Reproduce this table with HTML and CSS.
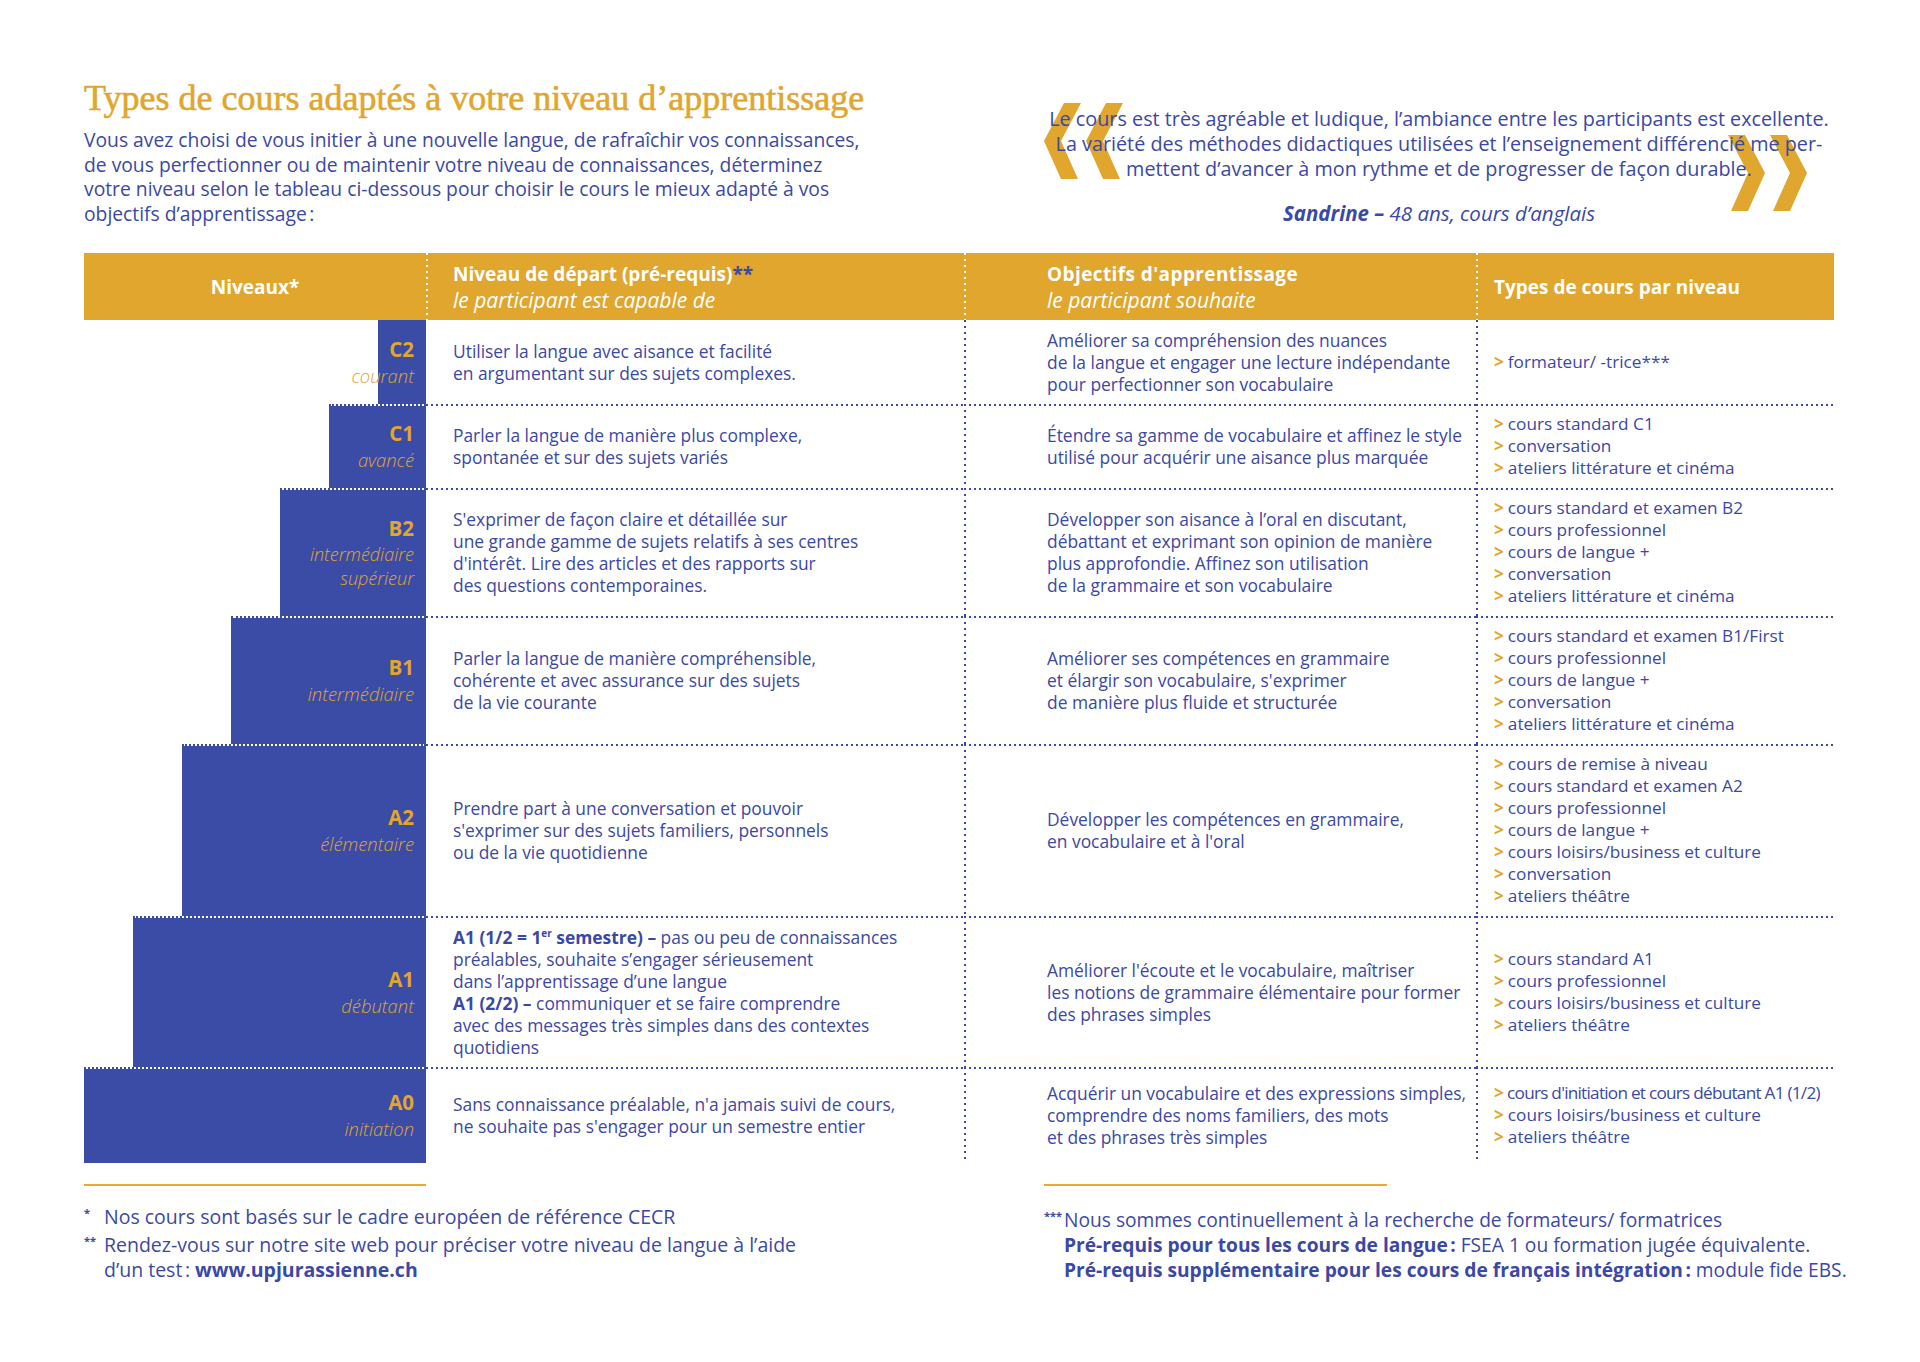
FILE: index.html
```html
<!DOCTYPE html>
<html lang="fr">
<head>
<meta charset="utf-8">
<title>Types de cours</title>
<link rel="stylesheet" href="styles.css">
</head>
<body>
<div class="page">
  <header class="top">
    <div class="intro">
      <h1 class="title">Types de cours adaptés à votre niveau d’apprentissage</h1>
      <p class="lead">Vous avez choisi de vous initier à une nouvelle langue, de rafraîchir vos connaissances,<br>de vous perfectionner ou de maintenir votre niveau de connaissances, déterminez<br>votre niveau selon le tableau ci-dessous pour choisir le cours le mieux adapté à vos<br>objectifs d’apprentissage&#8239;:</p>
    </div>
    <div class="quote">
      <svg class="qmark qopen" width="80" height="76" viewBox="0 0 80 76"><polygon points="20,0 37,0 17,38 34,76 17,76 0,38" fill="#e0a62e"/><polygon points="62,0 79,0 59,38 76,76 59,76 42,38" fill="#e0a62e"/></svg>
      <svg class="qmark qclose" width="80" height="76" viewBox="0 0 80 76"><polygon points="0,0 17,0 37,38 20,76 3,76 20,38" fill="#e0a62e"/><polygon points="42,0 59,0 79,38 62,76 45,76 62,38" fill="#e0a62e"/></svg>
      <p class="qtext">Le cours est très agréable et ludique, l’ambiance entre les participants est excellente.<br>La variété des méthodes didactiques utilisées et l’enseignement différencié me per-<br>mettent d’avancer à mon rythme et de progresser de façon durable.</p>
      <p class="qauthor"><b>Sandrine –</b> 48 ans, cours d’anglais</p>
    </div>
  </header>

  <section class="table">
    <div class="thead">
      <div class="th th-lvl"><p><b>Niveaux*</b></p></div>
      <div class="th th-2"><p><b>Niveau de départ (pré-requis)<span class="star">**</span></b><br><i>le participant est capable de</i></p></div>
      <div class="th th-3"><p><b>Objectifs d'apprentissage</b><br><i>le participant souhaite</i></p></div>
      <div class="th th-4"><p><b>Types de cours par niveau</b></p></div>
    </div>

    <div class="row r-c2 first">
      <div class="lvl"><div class="step s1"></div><div class="lbl"><b>C2</b><i>courant</i></div></div>
      <div class="cell c2"><p>Utiliser la langue avec aisance et facilité<br>en argumentant sur des sujets complexes.</p></div>
      <div class="cell c3"><p>Améliorer sa compréhension des nuances<br>de la langue et engager une lecture indépendante<br>pour perfectionner son vocabulaire</p></div>
      <ul class="cell c4"><li>formateur/ -trice***</li></ul>
    </div>

    <div class="row r-c1">
      <div class="lvl"><div class="step s2"></div><div class="lbl"><b>C1</b><i>avancé</i></div></div>
      <div class="cell c2"><p>Parler la langue de manière plus complexe,<br>spontanée et sur des sujets variés</p></div>
      <div class="cell c3"><p>Étendre sa gamme de vocabulaire et affinez le style<br>utilisé pour acquérir une aisance plus marquée</p></div>
      <ul class="cell c4"><li>cours standard C1</li><li>conversation</li><li>ateliers littérature et cinéma</li></ul>
    </div>

    <div class="row r-b2">
      <div class="lvl"><div class="step s3"></div><div class="lbl"><b>B2</b><i class="two">intermédiaire<br>supérieur</i></div></div>
      <div class="cell c2"><p>S'exprimer de façon claire et détaillée sur<br>une grande gamme de sujets relatifs à ses centres<br>d'intérêt. Lire des articles et des rapports sur<br>des questions contemporaines.</p></div>
      <div class="cell c3"><p>Développer son aisance à l’oral en discutant,<br>débattant et exprimant son opinion de manière<br>plus approfondie. Affinez son utilisation<br>de la grammaire et son vocabulaire</p></div>
      <ul class="cell c4"><li>cours standard et examen B2</li><li>cours professionnel</li><li>cours de langue +</li><li>conversation</li><li>ateliers littérature et cinéma</li></ul>
    </div>

    <div class="row r-b1">
      <div class="lvl"><div class="step s4"></div><div class="lbl"><b>B1</b><i>intermédiaire</i></div></div>
      <div class="cell c2"><p>Parler la langue de manière compréhensible,<br>cohérente et avec assurance sur des sujets<br>de la vie courante</p></div>
      <div class="cell c3"><p>Améliorer ses compétences en grammaire<br>et élargir son vocabulaire, s'exprimer<br>de manière plus fluide et structurée</p></div>
      <ul class="cell c4"><li>cours standard et examen B1/First</li><li>cours professionnel</li><li>cours de langue +</li><li>conversation</li><li>ateliers littérature et cinéma</li></ul>
    </div>

    <div class="row r-a2">
      <div class="lvl"><div class="step s5"></div><div class="lbl"><b>A2</b><i>élémentaire</i></div></div>
      <div class="cell c2"><p>Prendre part à une conversation et pouvoir<br>s'exprimer sur des sujets familiers, personnels<br>ou de la vie quotidienne</p></div>
      <div class="cell c3"><p>Développer les compétences en grammaire,<br>en vocabulaire et à l'oral</p></div>
      <ul class="cell c4"><li>cours de remise à niveau</li><li>cours standard et examen A2</li><li>cours professionnel</li><li>cours de langue +</li><li>cours loisirs/business et culture</li><li>conversation</li><li>ateliers théâtre</li></ul>
    </div>

    <div class="row r-a1">
      <div class="lvl"><div class="step s6"></div><div class="lbl"><b>A1</b><i>débutant</i></div></div>
      <div class="cell c2"><p><b>A1 (1/2 = 1<sup>er</sup> semestre) –</b> pas ou peu de connaissances<br>préalables, souhaite s’engager sérieusement<br>dans l’apprentissage d’une langue<br><b>A1 (2/2) –</b> communiquer et se faire comprendre<br>avec des messages très simples dans des contextes<br>quotidiens</p></div>
      <div class="cell c3"><p>Améliorer l'écoute et le vocabulaire, maîtriser<br>les notions de grammaire élémentaire pour former<br>des phrases simples</p></div>
      <ul class="cell c4"><li>cours standard A1</li><li>cours professionnel</li><li>cours loisirs/business et culture</li><li>ateliers théâtre</li></ul>
    </div>

    <div class="row r-a0">
      <div class="lvl"><div class="step s7"></div><div class="lbl"><b>A0</b><i>initiation</i></div></div>
      <div class="cell c2"><p>Sans connaissance préalable, n'a jamais suivi de cours,<br>ne souhaite pas s'engager pour un semestre entier</p></div>
      <div class="cell c3"><p>Acquérir un vocabulaire et des expressions simples,<br>comprendre des noms familiers, des mots<br>et des phrases très simples</p></div>
      <ul class="cell c4"><li class="tight">cours d'initiation et cours débutant A1 (1/2)</li><li>cours loisirs/business et culture</li><li>ateliers théâtre</li></ul>
    </div>
  </section>

  <footer class="notes">
    <div class="note-col">
      <hr class="rule">
      <div class="fn"><span class="mk">*</span><span>Nos cours sont basés sur le cadre européen de référence CECR</span></div>
      <div class="fn"><span class="mk">**</span><span>Rendez-vous sur notre site web pour préciser votre niveau de langue à l’aide<br>d’un test&#8239;: <b>www.upjurassienne.ch</b></span></div>
    </div>
    <div class="note-col right">
      <hr class="rule">
      <div class="fn"><span class="mk">***</span><span>Nous sommes continuellement à la recherche de formateurs/ formatrices<br><b>Pré-requis pour tous les cours de langue&#8239;:</b> FSEA 1 ou formation jugée équivalente.<br><b>Pré-requis supplémentaire pour les cours de français intégration&#8239;:</b> module fide EBS.</span></div>
    </div>
  </footer>
</div>
</body>
</html>
```

FILE: styles.css
```css
* { box-sizing: border-box; }

html, body {
  margin: 0;
  padding: 0;
  background: #ffffff;
}

body {
  font-family: "Open Sans", "Lato", sans-serif;
  color: #3b48a6;
  width: 1920px;
  height: 1362px;
  overflow: hidden;
}

p { margin: 0; }

.page {
  padding: 0 86px 0 84px;
}

/* ---------- top ---------- */
.top {
  display: flex;
  justify-content: space-between;
  height: 253px;
}

.intro {
  width: 900px;
  padding-top: 77px;
}

.title {
  margin: 0;
  font-family: "Liberation Serif", "Times New Roman", serif;
  font-weight: normal;
  font-size: 36px;
  line-height: 42px;
  color: #e0a62e;
  -webkit-text-stroke: 0.6px #e0a62e;
}

.lead {
  margin-top: 9px;
  font-size: 19.3px;
  line-height: 24.5px;
}

.quote {
  position: relative;
  width: 790px;
  padding-top: 106px;
  text-align: center;
}

.qtext {
  position: relative;
  font-size: 19.8px;
  line-height: 25px;
  font-weight: 500;
}

.qauthor {
  position: relative;
  margin-top: 20px;
  font-size: 20.5px;
  line-height: 24px;
  font-style: italic;
  font-weight: 400;
}
.qauthor b { font-weight: 700; }

.qmark {
  position: absolute;
}
.qopen { left: 0; top: 103px; }
.qclose { left: 684px; top: 135px; }

/* ---------- table ---------- */
.table {
  width: 1750px;
}

.thead,
.row {
  display: grid;
  grid-template-columns: 342px 538px 512px 358px;
}

.thead {
  height: 67px;
  background: #e0a62e;
  color: #ffffff;
}

.th {
  display: flex;
  flex-direction: column;
  justify-content: center;
  font-size: 19px;
  line-height: 26px;
  padding-top: 2px;
}
.th b { font-weight: 700; }
.th i { font-weight: 400; font-size: 21px; }
.th .star { color: #3b48a6; }

.th-lvl {
  align-items: center;
  padding-top: 0;
}
.th-2 { padding-left: 27px; }
.th-3 { padding-left: 83px; }
.th-3 b { letter-spacing: 0.4px; }
.th-4 { padding-left: 18px; padding-top: 0; }

.th-2, .th-3, .th-4 {
  background-image: linear-gradient(to bottom, #ffffff 34%, transparent 34%);
  background-size: 2px 6px;
  background-repeat: repeat-y;
  background-position: 0 0;
}

.r-c2 { height: 84px; }
.r-c1 { height: 84px; }
.r-b2 { height: 128px; }
.r-b1 { height: 128px; }
.r-a2 { height: 172px; }
.r-a1 { height: 151px; }
.r-a0 { height: 96px; }

.lvl {
  display: grid;
}

.step,
.lbl {
  grid-area: 1 / 1;
}

.step {
  justify-self: end;
  background: #3a4ca6;
  background-clip: padding-box;
  border-top: 2px dotted #3a4ca6;
}
.first .step { border-top: 0; }

.s1 { width: 48px; }
.s2 { width: 97px; }
.s3 { width: 146px; }
.s4 { width: 195px; }
.s5 { width: 244px; }
.s6 { width: 293px; }
.s7 { width: 342px; }

.lbl {
  justify-self: end;
  align-self: center;
  padding-right: 12px;
  display: flex;
  flex-direction: column;
  align-items: flex-end;
  text-align: right;
  color: #e0a62e;
}
.lbl b {
  display: block;
  font-size: 20.5px;
  line-height: 27px;
  font-weight: 700;
}
.lbl i {
  display: block;
  font-size: 18.4px;
  line-height: 25px;
  font-weight: 300;
}
.lbl i.two {
  font-size: 18px;
  line-height: 24px;
}

.cell {
  margin: 0;
  display: flex;
  flex-direction: column;
  justify-content: center;
  font-size: 17.4px;
  line-height: 22px;
}

.row .cell {
  background-image: linear-gradient(to right, #3b48a6 40%, transparent 40%);
  background-size: 5px 2px;
  background-repeat: repeat-x;
  background-position: 0 0;
}
.row .c3,
.row .c4 {
  background-image:
    linear-gradient(to right, #3b48a6 40%, transparent 40%),
    linear-gradient(to bottom, #3b48a6 34%, transparent 34%);
  background-size: 5px 2px, 2px 6px;
  background-repeat: repeat-x, repeat-y;
  background-position: 0 0, 0 0;
}
.row.first .cell { background-image: none; }
.row.first .c3,
.row.first .c4 {
  background-image: linear-gradient(to bottom, #3b48a6 34%, transparent 34%);
  background-size: 2px 6px;
  background-repeat: repeat-y;
}

.c2 { padding-left: 27px; }
.c3 { padding-left: 83px; }
.c4 {
  padding-left: 18px;
  list-style: none;
  font-size: 17.2px;
}

.c2 b { font-weight: 700; }
.c2 sup { font-size: 10px; line-height: 0; vertical-align: 7px; }

.c4 li::before {
  content: ">";
  color: #e0a62e;
  font-weight: 700;
  margin-right: 4px;
}
.c4 li.tight { letter-spacing: -0.75px; }

/* ---------- notes ---------- */
.notes {
  display: flex;
  justify-content: space-between;
  padding-top: 21px;
}

.note-col {
  width: 790px;
}
.note-col:first-child { width: 880px; }
.note-col.right { width: 810px; margin-right: -20px; }

.rule {
  margin: 0 0 18px;
  width: 342px;
  height: 2px;
  border: 0;
  background: #e8a834;
}
.right .rule { width: 343px; margin-bottom: 21px; }

.fn {
  display: grid;
  grid-template-columns: 20px 1fr;
  font-size: 19.5px;
  line-height: 25px;
  white-space: nowrap;
}
.fn + .fn { margin-top: 3px; }
.right .fn { font-size: 19.2px; }
.fn .mk {
  font-size: 11px;
  line-height: 18px;
  font-weight: 700;
}
.fn b { font-weight: 700; }
```
